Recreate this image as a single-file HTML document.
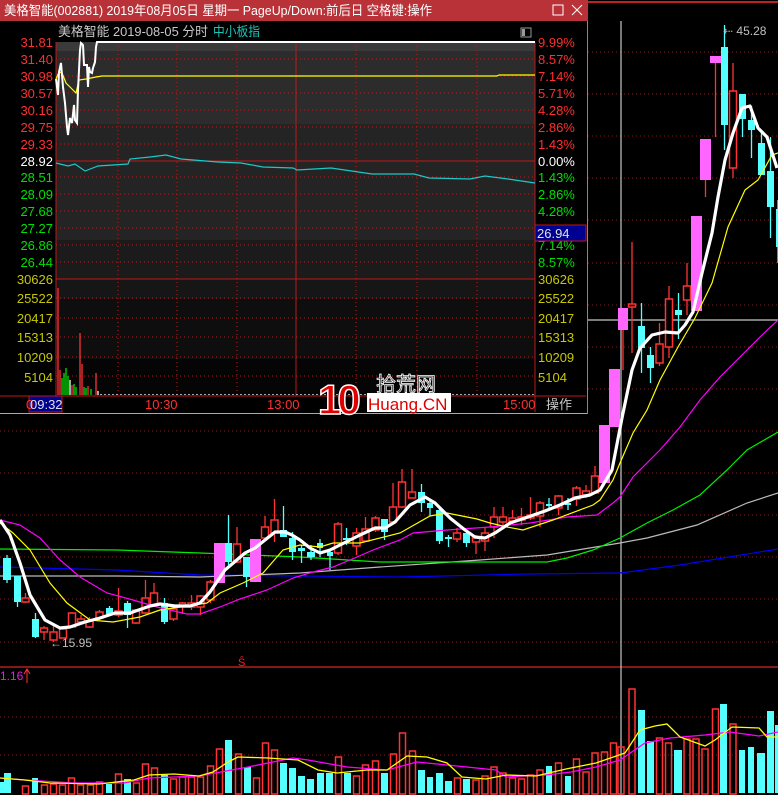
<!DOCTYPE html>
<html><head><meta charset="utf-8"><style>
html,body{margin:0;padding:0;background:#000;width:778px;height:795px;overflow:hidden}
svg{display:block}
text{font-family:"Liberation Sans","Noto Sans CJK SC",sans-serif}
</style></head><body>
<svg width="778" height="795" viewBox="0 0 778 795" xmlns="http://www.w3.org/2000/svg">
<rect width="778" height="795" fill="#000"/>
<line x1="0" y1="2" x2="778" y2="2" stroke="#c02020" stroke-width="2"/>
<g stroke="#8a1a1a" stroke-dasharray="1,3" stroke-width="1">
<line x1="0" y1="52" x2="778" y2="52"/><line x1="0" y1="94" x2="778" y2="94"/><line x1="0" y1="136" x2="778" y2="136"/><line x1="0" y1="178" x2="778" y2="178"/><line x1="0" y1="220" x2="778" y2="220"/><line x1="0" y1="263" x2="778" y2="263"/><line x1="0" y1="305" x2="778" y2="305"/><line x1="0" y1="347" x2="778" y2="347"/><line x1="0" y1="389" x2="778" y2="389"/><line x1="0" y1="431" x2="778" y2="431"/><line x1="0" y1="473" x2="778" y2="473"/><line x1="0" y1="515" x2="778" y2="515"/><line x1="0" y1="557" x2="778" y2="557"/><line x1="0" y1="599" x2="778" y2="599"/><line x1="0" y1="642" x2="778" y2="642"/>
<line x1="0" y1="717" x2="778" y2="717"/><line x1="0" y1="755" x2="778" y2="755"/>
</g>
<line x1="0" y1="667" x2="778" y2="667" stroke="#b02020" stroke-width="1.5"/>
<line x1="621" y1="21" x2="621" y2="795" stroke="#c8c8c8" stroke-width="1.2"/>
<line x1="588" y1="320" x2="778" y2="320" stroke="#c8c8c8" stroke-width="1.2"/>
<g fill="none" stroke-width="1.2">
<polyline stroke="#0000ff" points="0,567 117,570 200,575 300,576 400,577 527,574 620,573 680,565 778,549"/>
<polyline stroke="#bbbbbb" points="0,576 117,576 200,577 300,573 380,567 480,560 547,555 620,543 647,538 697,525 747,503 778,493"/>
<polyline stroke="#00ee00" points="0,549 117,550 200,553 300,557 380,562 547,562 567,558 593,550 620,538 647,523 673,510 700,495 727,470 747,450 778,432"/>
</g>
<g stroke="#54ffff" stroke-width="1.3">
<line x1="7" y1="555" x2="7" y2="583"/><line x1="17.5" y1="576" x2="17.5" y2="607"/><line x1="35.5" y1="613" x2="35.5" y2="638"/><line x1="109.5" y1="606" x2="109.5" y2="616"/><line x1="127.5" y1="601" x2="127.5" y2="628"/><line x1="164.5" y1="598" x2="164.5" y2="624"/><line x1="228.5" y1="515" x2="228.5" y2="565"/><line x1="246.5" y1="557" x2="246.5" y2="587"/><line x1="283.5" y1="506" x2="283.5" y2="537"/><line x1="292.5" y1="532" x2="292.5" y2="560"/><line x1="301.5" y1="545" x2="301.5" y2="563"/><line x1="311" y1="545" x2="311" y2="560"/><line x1="320" y1="539" x2="320" y2="557"/><line x1="330" y1="550" x2="330" y2="570"/><line x1="346.5" y1="528" x2="346.5" y2="545"/><line x1="384.5" y1="519" x2="384.5" y2="540"/><line x1="421.5" y1="484" x2="421.5" y2="512"/><line x1="430" y1="500" x2="430" y2="516"/><line x1="439.5" y1="507" x2="439.5" y2="544"/><line x1="448.5" y1="535" x2="448.5" y2="547"/><line x1="466.5" y1="528" x2="466.5" y2="547"/><line x1="549" y1="498" x2="549" y2="509"/><line x1="568" y1="498" x2="568" y2="510"/><line x1="641.5" y1="303" x2="641.5" y2="373"/><line x1="650.5" y1="347" x2="650.5" y2="383"/><line x1="678.5" y1="293" x2="678.5" y2="339"/><line x1="724.5" y1="25" x2="724.5" y2="150"/><line x1="742.5" y1="94" x2="742.5" y2="137"/><line x1="751.5" y1="106" x2="751.5" y2="158"/><line x1="761.5" y1="132" x2="761.5" y2="175"/><line x1="770.5" y1="137" x2="770.5" y2="238"/><line x1="778" y1="200" x2="778" y2="263"/>
</g>
<g stroke="#ff3333" stroke-width="1.3">
<line x1="25.5" y1="593" x2="25.5" y2="603"/><line x1="44" y1="626" x2="44" y2="640"/><line x1="53.5" y1="626" x2="53.5" y2="642"/><line x1="72" y1="612" x2="72" y2="628"/><line x1="81" y1="615" x2="81" y2="623"/><line x1="89.5" y1="617" x2="89.5" y2="628"/><line x1="99.5" y1="610" x2="99.5" y2="620"/><line x1="118.5" y1="588" x2="118.5" y2="617"/><line x1="136" y1="609" x2="136" y2="624"/><line x1="145.5" y1="580" x2="145.5" y2="614"/><line x1="154" y1="583" x2="154" y2="607"/><line x1="173.5" y1="605" x2="173.5" y2="621"/><line x1="182.5" y1="602" x2="182.5" y2="614"/><line x1="191.5" y1="595" x2="191.5" y2="610"/><line x1="200.5" y1="595" x2="200.5" y2="615"/><line x1="210.5" y1="580" x2="210.5" y2="603"/><line x1="237" y1="527" x2="237" y2="563"/><line x1="265" y1="516" x2="265" y2="540"/><line x1="274.5" y1="499" x2="274.5" y2="542"/><line x1="338" y1="522" x2="338" y2="555"/><line x1="356.5" y1="528" x2="356.5" y2="555"/><line x1="365.5" y1="517" x2="365.5" y2="542"/><line x1="375.5" y1="516" x2="375.5" y2="532"/><line x1="393" y1="483" x2="393" y2="523"/><line x1="402" y1="469" x2="402" y2="508"/><line x1="412" y1="469" x2="412" y2="498"/><line x1="457" y1="528" x2="457" y2="542"/><line x1="476" y1="535" x2="476" y2="554"/><line x1="485" y1="528" x2="485" y2="551"/><line x1="494" y1="507" x2="494" y2="538"/><line x1="503" y1="507" x2="503" y2="525"/><line x1="512.5" y1="510" x2="512.5" y2="524"/><line x1="521.5" y1="508" x2="521.5" y2="525"/><line x1="530.5" y1="497" x2="530.5" y2="520"/><line x1="540" y1="501" x2="540" y2="527"/><line x1="558.5" y1="495" x2="558.5" y2="515"/><line x1="576.5" y1="486" x2="576.5" y2="506"/><line x1="586" y1="485" x2="586" y2="498"/><line x1="595" y1="466" x2="595" y2="493"/><line x1="623" y1="330" x2="623" y2="370"/><line x1="632" y1="242" x2="632" y2="353"/><line x1="659.5" y1="323" x2="659.5" y2="366"/><line x1="669" y1="286" x2="669" y2="358"/><line x1="687" y1="263" x2="687" y2="315"/><line x1="733" y1="63" x2="733" y2="178"/><line x1="705.5" y1="180" x2="705.5" y2="197"/><line x1="715.5" y1="63" x2="715.5" y2="137"/>
</g>
<g fill="#54ffff">
<rect x="3" y="558" width="8" height="22"/><rect x="14" y="576" width="7" height="26"/><rect x="32" y="619" width="7" height="18"/><rect x="106" y="608" width="7" height="6"/><rect x="124" y="603" width="7" height="12"/><rect x="161" y="603" width="7" height="19"/><rect x="225" y="543" width="7" height="19"/><rect x="243" y="557" width="7" height="20"/><rect x="280" y="530" width="7" height="7"/><rect x="289" y="538" width="7" height="14"/><rect x="298" y="548" width="7" height="3"/><rect x="307" y="552" width="8" height="5"/><rect x="317" y="543" width="6" height="5"/><rect x="327" y="552" width="6" height="4"/><rect x="343" y="538" width="7" height="2"/><rect x="381" y="519" width="7" height="13"/><rect x="418" y="492" width="7" height="11"/><rect x="427" y="503" width="6" height="5"/><rect x="436" y="510" width="7" height="31"/><rect x="445" y="537" width="7" height="2"/><rect x="463" y="533" width="7" height="10"/><rect x="546" y="504" width="6" height="2"/><rect x="565" y="503" width="6" height="2"/><rect x="638" y="326" width="7" height="22"/><rect x="647" y="355" width="7" height="13"/><rect x="675" y="310" width="7" height="5"/><rect x="721" y="47" width="7" height="78"/><rect x="739" y="94" width="7" height="25"/><rect x="748" y="120" width="7" height="10"/><rect x="758" y="143" width="7" height="32"/><rect x="767" y="171" width="7" height="36"/><rect x="776" y="209" width="4" height="38"/>
</g>
<g fill="#000" stroke="#ff3333" stroke-width="1.5">
<rect x="22" y="598" width="7" height="4"/><rect x="40.5" y="628" width="7" height="4"/><rect x="50" y="632" width="7" height="8"/><rect x="59.5" y="629" width="7" height="9"/><rect x="68.5" y="613" width="7" height="14"/><rect x="77.5" y="619" width="7" height="3"/><rect x="86" y="621" width="7" height="6"/><rect x="96" y="612" width="7" height="6"/><rect x="115" y="611" width="7" height="4"/><rect x="132.5" y="610" width="7" height="13"/><rect x="142" y="598" width="7" height="15"/><rect x="150.5" y="593" width="7" height="12"/><rect x="170" y="609" width="7" height="10"/><rect x="179.5" y="603" width="6" height="4"/><rect x="188" y="603" width="7" height="4"/><rect x="197" y="596" width="7" height="11"/><rect x="207" y="582" width="7" height="18"/><rect x="233.5" y="544" width="7" height="18"/><rect x="261.5" y="527" width="7" height="11"/><rect x="271" y="520" width="7" height="13"/><rect x="334.5" y="524" width="7" height="29"/><rect x="353" y="533" width="7" height="13"/><rect x="362" y="529" width="7" height="12"/><rect x="372" y="518" width="7" height="12"/><rect x="389.5" y="507" width="7" height="15"/><rect x="398.5" y="482" width="7" height="25"/><rect x="408.5" y="492" width="7" height="6"/><rect x="453.5" y="533" width="7" height="6"/><rect x="472.5" y="538" width="7" height="4"/><rect x="481.5" y="533" width="7" height="8"/><rect x="490.5" y="517" width="7" height="10"/><rect x="499.5" y="517" width="7" height="5"/><rect x="509" y="518" width="7" height="3"/><rect x="518" y="517" width="7" height="3"/><rect x="527" y="515" width="7" height="3"/><rect x="536.5" y="503" width="7" height="13"/><rect x="555" y="496" width="7" height="12"/><rect x="573" y="488" width="7" height="11"/><rect x="582.5" y="491" width="7" height="4"/><rect x="591.5" y="476" width="7" height="17"/><rect x="628.5" y="304" width="7" height="3"/><rect x="656" y="344" width="7" height="19"/><rect x="665.5" y="299" width="7" height="48"/><rect x="683.5" y="286" width="7" height="14"/><rect x="729.5" y="91" width="7" height="77"/>
</g>
<g fill="#ff66ff">
<rect x="214" y="543" width="11" height="40"/><rect x="250" y="539" width="11" height="43"/><rect x="599" y="425" width="11" height="58"/><rect x="609" y="369" width="11" height="58"/><rect x="618" y="308" width="10" height="22"/><rect x="691" y="216" width="11" height="95"/><rect x="700" y="139" width="11" height="41"/><rect x="710" y="56" width="11" height="7"/>
</g>
<g fill="none">
<polyline stroke="#ff00ff" stroke-width="1.2" points="0,520 20,525 40,538 60,560 80,577 107,593 133,600 157,607 187,614 200,614 220,607 240,599 267,590 293,578 313,572 333,567 357,557 373,550 400,540 413,533 447,530 490,527 530,523 567,517 597,515 613,503 620,497 633,477 660,450 680,427 700,400 720,377 740,357 760,337 778,320"/>
<polyline stroke="#ffff00" stroke-width="1.2" points="0,523 13,533 30,550 50,583 67,603 90,620 113,622 140,617 160,610 180,607 207,603 220,593 243,583 263,573 283,550 300,545 320,547 333,543 360,543 400,533 430,516 447,513 477,519 490,523 507,527 523,530 553,520 593,505 600,500 613,480 620,463 633,433 647,410 660,380 678,347 695,318 712,283 728,227 745,190 758,180 772,155 778,153"/>
<polyline stroke="#ffffff" stroke-width="3.2" stroke-linejoin="round" points="0,520 10,535 20,563 30,595 45,620 60,628 70,627 85,622 100,618 115,613 130,613 150,606 160,604 175,606 190,606 200,603 210,592 225,570 245,553 255,548 265,540 275,532 285,532 292,535 300,540 310,548 320,553 330,550 340,545 360,535 375,528 385,528 395,522 410,505 425,497 435,503 450,518 465,530 475,537 485,538 495,533 510,523 525,518 545,511 560,505 575,498 590,495 600,490 612,470 622,418 632,370 640,348 652,335 665,332 678,333 685,325 693,312 702,273 712,233 718,197 725,160 733,133 742,108 750,106 758,128 767,137 777,168"/>
</g>
<text x="723" y="35" font-size="12" fill="#c0c0c0">⇠ 45.28</text>
<text x="50" y="647" font-size="12" fill="#c0c0c0">←15.95</text>
<text x="238" y="666" font-size="11" fill="#ff2020">Ŝ</text>
<text x="0" y="680" font-size="12" fill="#e020e0">1.16</text>
<line x1="27" y1="670" x2="27" y2="683" stroke="#ff3333"/><path d="M24,674 L27,669 L30,674" fill="none" stroke="#ff3333"/>
<g fill="#54ffff">
<rect x="0" y="782" width="4" height="11"/><rect x="4" y="773" width="7" height="20"/><rect x="32" y="778" width="6" height="15"/><rect x="106" y="784" width="6" height="9"/><rect x="124" y="779" width="7" height="14"/><rect x="161" y="775" width="7" height="18"/><rect x="225" y="740" width="7" height="53"/><rect x="244" y="767" width="7" height="26"/><rect x="280" y="763" width="7" height="30"/><rect x="289" y="768" width="7" height="25"/><rect x="298" y="776" width="7" height="17"/><rect x="307" y="779" width="7" height="14"/><rect x="317" y="773" width="7" height="20"/><rect x="326" y="773" width="7" height="20"/><rect x="344" y="773" width="7" height="20"/><rect x="381" y="773" width="7" height="20"/><rect x="418" y="770" width="7" height="23"/><rect x="427" y="777" width="6" height="16"/><rect x="436" y="773" width="7" height="20"/><rect x="445" y="781" width="7" height="12"/><rect x="463" y="779" width="7" height="14"/><rect x="546" y="766" width="6" height="27"/><rect x="565" y="776" width="6" height="17"/><rect x="638" y="710" width="7" height="83"/><rect x="647" y="741" width="7" height="52"/><rect x="674" y="750" width="8" height="43"/><rect x="720" y="704" width="7" height="89"/><rect x="739" y="750" width="6" height="43"/><rect x="748" y="747" width="6" height="46"/><rect x="757" y="753" width="8" height="40"/><rect x="767" y="711" width="7" height="82"/><rect x="775" y="725" width="3" height="68"/>
</g>
<g fill="none" stroke="#ff3333" stroke-width="1.5">
<rect x="22.5" y="786" width="6" height="8"/><rect x="41.5" y="785" width="6" height="9"/><rect x="50.5" y="784" width="6" height="10"/><rect x="59.5" y="785" width="6" height="9"/><rect x="68.5" y="778" width="6" height="16"/><rect x="77.5" y="785" width="6" height="9"/><rect x="87.5" y="785" width="6" height="9"/><rect x="96.5" y="782" width="6" height="12"/><rect x="115.5" y="774" width="6" height="20"/><rect x="133.5" y="783" width="6" height="11"/><rect x="142.5" y="764" width="6" height="30"/><rect x="151.5" y="768" width="6" height="26"/><rect x="170.5" y="779" width="6" height="15"/><rect x="179.5" y="777" width="6" height="17"/><rect x="188.5" y="777" width="6" height="17"/><rect x="197.5" y="777" width="6" height="17"/><rect x="207.5" y="766" width="6" height="28"/><rect x="216.5" y="749" width="6" height="45"/><rect x="235.5" y="754" width="6" height="40"/><rect x="253.5" y="778" width="6" height="16"/><rect x="262.5" y="743" width="6" height="51"/><rect x="271.5" y="750" width="6" height="44"/><rect x="335.5" y="757" width="6" height="37"/><rect x="353.5" y="776" width="6" height="18"/><rect x="362.5" y="765" width="6" height="29"/><rect x="372.5" y="761" width="6" height="33"/><rect x="390.5" y="754" width="6" height="40"/><rect x="399.5" y="733" width="6" height="61"/><rect x="409.5" y="751" width="6" height="43"/><rect x="454.5" y="778" width="6" height="16"/><rect x="473" y="780" width="6" height="14"/><rect x="482" y="776" width="6" height="18"/><rect x="491" y="767" width="6" height="27"/><rect x="500" y="773" width="6" height="21"/><rect x="509.5" y="778" width="6" height="16"/><rect x="518.5" y="779" width="6" height="15"/><rect x="527.5" y="775" width="6" height="19"/><rect x="537" y="770" width="6" height="24"/><rect x="555.5" y="763" width="6" height="31"/><rect x="573.5" y="759" width="6" height="35"/><rect x="583" y="772" width="6" height="22"/><rect x="592" y="753" width="6" height="41"/><rect x="601.5" y="752" width="6" height="42"/><rect x="610.5" y="743" width="6" height="51"/><rect x="618" y="747" width="6" height="47"/><rect x="629" y="689" width="6" height="105"/><rect x="656.5" y="738" width="6" height="56"/><rect x="665.5" y="743" width="6" height="51"/><rect x="684" y="739" width="6" height="55"/><rect x="693" y="739" width="6" height="55"/><rect x="702" y="749" width="6" height="45"/><rect x="712.5" y="709" width="6" height="85"/><rect x="730" y="724" width="6" height="70"/>
</g>
<polyline fill="none" stroke="#ff00ff" stroke-width="1.3" points="0,778 25,780 74,783 124,783 149,778 199,776 248,767 293,758 308,760 347,767 387,770 417,762 447,765 496,770 506,777 546,775 571,772 596,767 620,760 645,743 670,738 705,735 730,732 759,736 778,732"/>
<polyline fill="none" stroke="#ffff00" stroke-width="1.3" points="0,778 25,780 50,783 99,784 134,780 149,775 174,774 199,776 213,772 228,762 238,757 268,758 298,760 318,770 337,773 367,770 387,770 407,756 427,757 447,763 462,777 486,779 506,775 536,776 566,769 596,763 625,753 640,730 655,726 667,724 680,737 705,746 715,740 732,727 759,728 767,737 778,737"/>

<!-- POPUP -->
<rect x="0" y="0" width="588" height="414" fill="#000"/>
<rect x="0" y="0" width="588" height="21" fill="#b93238"/>
<text x="4" y="15" font-size="13" fill="#fff" textLength="428" lengthAdjust="spacingAndGlyphs">美格智能(002881) 2019年08月05日 星期一 PageUp/Down:前后日 空格键:操作</text>
<rect x="553" y="5" width="10" height="10" fill="none" stroke="#fff" stroke-width="1"/>
<path d="M572,5 L582,15 M582,5 L572,15" stroke="#fff" stroke-width="1"/>
<text x="58" y="36" font-size="13" fill="#c8c8c8" textLength="150" lengthAdjust="spacingAndGlyphs">美格智能  2019-08-05 分时</text>
<text x="213" y="36" font-size="13" fill="#1cc4b8" textLength="47" lengthAdjust="spacingAndGlyphs">中小板指</text>
<rect x="521" y="28" width="10" height="9" fill="none" stroke="#999"/><rect x="522" y="29" width="3" height="7" fill="#999"/>
<rect x="56" y="42" width="479" height="9" fill="#3a3a3a"/>
<rect x="56" y="51" width="479" height="73" fill="#2c2c2c"/>
<rect x="56" y="124" width="479" height="116" fill="#242424"/>
<rect x="56" y="240" width="479" height="39" fill="#1b1b1b"/>
<rect x="56" y="279" width="479" height="20" fill="#161616"/>
<rect x="56" y="299" width="479" height="60" fill="#0e0e0e"/>
<rect x="56" y="359" width="479" height="37" fill="#050505"/>
<g stroke="#c01818" stroke-dasharray="1,3" stroke-width="1">
<line x1="118" y1="42" x2="118" y2="396"/><line x1="177" y1="42" x2="177" y2="396"/><line x1="237" y1="42" x2="237" y2="396"/><line x1="356" y1="42" x2="356" y2="396"/><line x1="417" y1="42" x2="417" y2="396"/><line x1="477" y1="42" x2="477" y2="396"/>
<line x1="56" y1="59" x2="535" y2="59"/><line x1="56" y1="76" x2="535" y2="76"/><line x1="56" y1="93" x2="535" y2="93"/><line x1="56" y1="110" x2="535" y2="110"/><line x1="56" y1="127" x2="535" y2="127"/><line x1="56" y1="144" x2="535" y2="144"/><line x1="56" y1="177" x2="535" y2="177"/><line x1="56" y1="194" x2="535" y2="194"/><line x1="56" y1="211" x2="535" y2="211"/><line x1="56" y1="228" x2="535" y2="228"/><line x1="56" y1="245" x2="535" y2="245"/><line x1="56" y1="262" x2="535" y2="262"/>
<line x1="56" y1="298" x2="535" y2="298"/><line x1="56" y1="318" x2="535" y2="318"/><line x1="56" y1="337" x2="535" y2="337"/><line x1="56" y1="357" x2="535" y2="357"/><line x1="56" y1="376" x2="535" y2="376"/>
</g>
<g stroke="#c01818" stroke-width="1">
<line x1="56" y1="42" x2="56" y2="412"/><line x1="535" y1="42" x2="535" y2="412"/><line x1="296" y1="42" x2="296" y2="396"/>
<line x1="56" y1="161" x2="535" y2="161"/><line x1="56" y1="279" x2="535" y2="279"/><line x1="0" y1="396" x2="586" y2="396"/>
</g>
<polyline fill="none" stroke="#ffff00" stroke-width="1.2" points="56,79 59,72 62,73 66,83 71,88 76,93 79,80 86,79 96,77 102,76 497,76 499,75 535,75"/>
<polyline fill="none" stroke="#1cc8c8" stroke-width="1.2" points="56,163 68,166 75,164 85,171 98,166 113,165 128,164 130,159 150,157 166,155 181,159 218,162 241,163 263,167 293,168 297,170 331,168 372,174 414,174 429,178 470,179 485,176 508,179 535,183"/>
<polyline fill="none" stroke="#fff" stroke-width="2" points="56,79 58,95 59,72 61,63 63,87 65,103 67,127 68,135 70,118 72,123 74,105 75,120 77,123 78,90 80,50 81,43 83,45 84,65 87,65 88,87 89,67 90,72 92,73 93,68 95,62 96,47 97,42 535,42"/>
<g stroke-width="1.3">
<line x1="58" y1="288" x2="58" y2="395" stroke="#ff3333"/><line x1="60" y1="370" x2="60" y2="395" stroke="#ff3333"/>
<line x1="62" y1="378" x2="62" y2="395" stroke="#00e000"/><line x1="64" y1="373" x2="64" y2="395" stroke="#00e000"/><line x1="66" y1="368" x2="66" y2="395" stroke="#00e000"/><line x1="68" y1="376" x2="68" y2="395" stroke="#00e000"/><line x1="70" y1="380" x2="70" y2="395" stroke="#fff"/><line x1="72" y1="385" x2="72" y2="395" stroke="#ff3333"/><line x1="74" y1="384" x2="74" y2="395" stroke="#00e000"/><line x1="76" y1="387" x2="76" y2="395" stroke="#00e000"/>
<line x1="80" y1="333" x2="80" y2="395" stroke="#ff3333"/><line x1="82" y1="364" x2="82" y2="395" stroke="#ff3333"/><line x1="84" y1="387" x2="84" y2="395" stroke="#00e000"/><line x1="86" y1="388" x2="86" y2="395" stroke="#00e000"/><line x1="88" y1="386" x2="88" y2="395" stroke="#ff3333"/><line x1="91" y1="389" x2="91" y2="395" stroke="#00e000"/><line x1="96" y1="373" x2="96" y2="395" stroke="#ff3333"/><line x1="98" y1="391" x2="98" y2="395" stroke="#fff"/>
</g>
<line x1="100" y1="394.5" x2="535" y2="394.5" stroke="#aaa" stroke-dasharray="2,2"/>
<g font-size="13" text-anchor="end">
<g fill="#ff3030"><text x="53" y="47">31.81</text><text x="53" y="64">31.40</text><text x="53" y="81">30.98</text><text x="53" y="98">30.57</text><text x="53" y="115">30.16</text><text x="53" y="132">29.75</text><text x="53" y="149">29.33</text></g>
<text x="53" y="166" fill="#fff">28.92</text>
<g fill="#00e000"><text x="53" y="182">28.51</text><text x="53" y="199">28.09</text><text x="53" y="216">27.68</text><text x="53" y="233">27.27</text><text x="53" y="250">26.86</text><text x="53" y="267">26.44</text></g>
<g fill="#c8c800"><text x="53" y="284">30626</text><text x="53" y="303">25522</text><text x="53" y="323">20417</text><text x="53" y="342">15313</text><text x="53" y="362">10209</text><text x="53" y="382">5104</text></g>
</g>
<g font-size="13">
<g fill="#ff3030"><text x="538" y="47">9.99%</text><text x="538" y="64">8.57%</text><text x="538" y="81">7.14%</text><text x="538" y="98">5.71%</text><text x="538" y="115">4.28%</text><text x="538" y="132">2.86%</text><text x="538" y="149">1.43%</text></g>
<text x="538" y="166" fill="#fff">0.00%</text>
<g fill="#00e000"><text x="538" y="182">1.43%</text><text x="538" y="199">2.86%</text><text x="538" y="216">4.28%</text><text x="538" y="250">7.14%</text><text x="538" y="267">8.57%</text></g>
<g fill="#c8c800"><text x="538" y="284">30626</text><text x="538" y="303">25522</text><text x="538" y="323">20417</text><text x="538" y="342">15313</text><text x="538" y="362">10209</text><text x="538" y="382">5104</text></g>
</g>
<rect x="535" y="225" width="51" height="16" fill="#000090" stroke="#c01818"/>
<text x="537" y="238" font-size="13" fill="#e0e0e0">26.94</text>
<rect x="29" y="396" width="33" height="16" fill="#000090" stroke="#c01818"/>
<g font-size="13" fill="#ff3030"><text x="26" y="409">0</text><text x="145" y="409">10:30</text><text x="267" y="409">13:00</text><text x="503" y="409">15:00</text></g>
<text x="30" y="409" font-size="13" fill="#e0e0e0">09:32</text>
<text x="546" y="409" font-size="13" fill="#c8c8c8">操作</text>
<line x1="0" y1="413.5" x2="588" y2="413.5" stroke="#aaa"/>
<line x1="587.5" y1="21" x2="587.5" y2="414" stroke="#888"/>
<text x="318" y="414" font-size="42" font-weight="bold" fill="#e00000" stroke="#fff" stroke-width="1.5" letter-spacing="-4">10</text>
<text x="376" y="391" font-size="20" fill="#111" stroke="#fff" stroke-width="0.8">拾荒网</text>
<rect x="367" y="393" width="84" height="19" fill="#fff"/>
<text x="368" y="410" font-size="17" fill="#e00000">Huang.CN</text>
</svg>
</body></html>
